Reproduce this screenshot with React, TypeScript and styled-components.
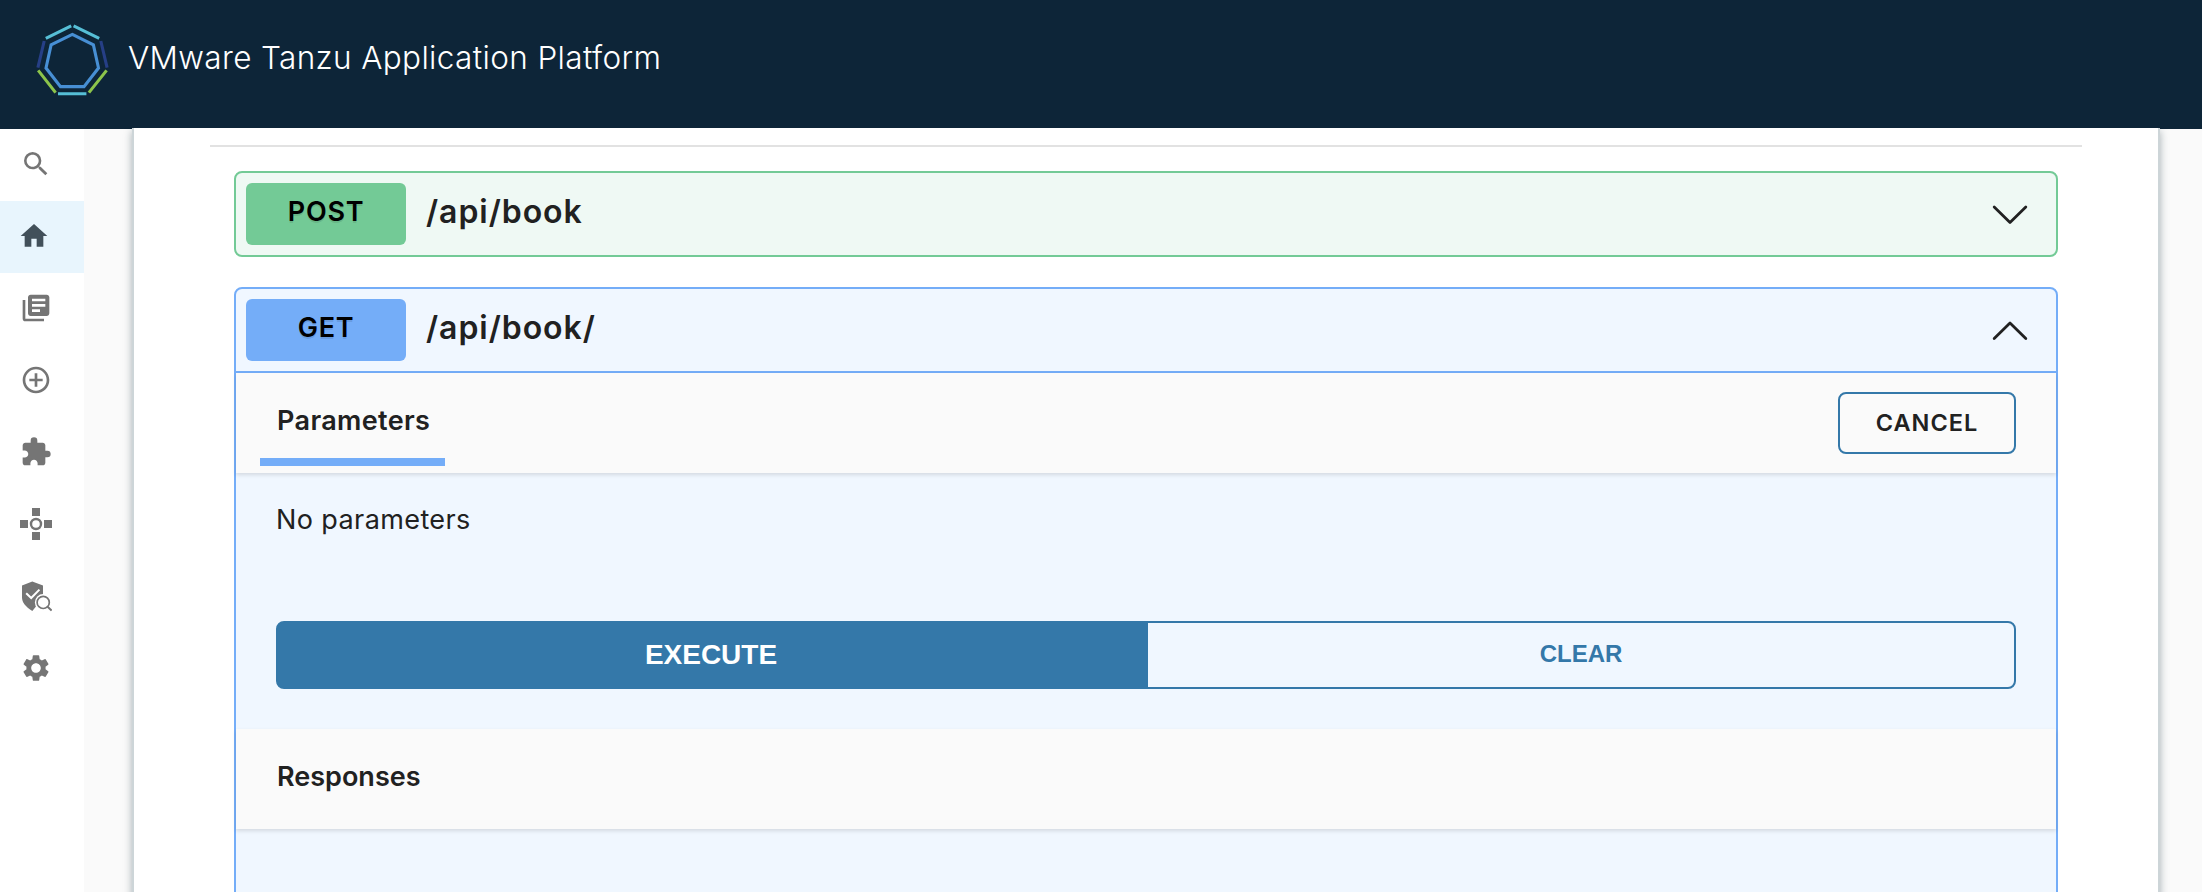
import React from 'react';
import styled, { createGlobalStyle } from 'styled-components';
import { MdAddCircleOutline, MdExtension, MdHome, MdLibraryBooks, MdSearch, MdSettings } from 'react-icons/md';

const GlobalStyle = createGlobalStyle`
  * { box-sizing: border-box; }
  body {
    margin: 0;
    background: #fafafa;
    color: #212121;
    font-family: Inter, "Liberation Sans", sans-serif;
    -webkit-font-smoothing: antialiased;
  }
`;

const Shell = styled.div`
  display: flex;
  flex-direction: column;
  height: 892px;
  overflow: hidden;
`;

const Header = styled.header`
  display: flex;
  align-items: flex-start;
  flex: 0 0 129px;
  padding: 20px 34px;
  gap: 16px;
  background: #0d2538;
`;

const Logo = styled.svg`
  width: 78px;
  height: 80px;
  flex: none;
`;

const Title = styled.h1`
  margin: 19px 0 0;
  color: #fff;
  font-size: 31.5px;
  font-weight: 350;
  line-height: 38px;
  letter-spacing: 0.36px;
`;

const Body = styled.div`
  display: flex;
  flex: 1;
  min-height: 0;
`;

const Sidebar = styled.nav`
  flex: 0 0 84px;
  background: #fff;
`;

const NavItem = styled.a<{ $active?: boolean }>`
  display: flex;
  align-items: center;
  height: 72px;
  padding: 0 0 2px ${(p) => (p.$active ? 18 : 20)}px;
  background: ${(p) => (p.$active ? '#e8f5fd' : 'transparent')};
  color: ${(p) => (p.$active ? '#42505a' : '#757575')};

  svg {
    width: 32px;
    height: 32px;
  }
`;

const Content = styled.main`
  flex: 1;
  min-width: 0;
  display: flex;
  padding: 0 42px 0 48px;
`;

const Paper = styled.section`
  flex: 1;
  height: 800px;
  margin-top: -1px;
  padding: 17px 76px 0;
  border: solid #cdd5d8;
  border-width: 0 2px;
  background: #fff;
  box-shadow: 0 3px 8px rgba(20, 45, 55, 0.36);
  clip-path: inset(0 -20px);
`;

const Divider = styled.hr`
  height: 2px;
  margin: 0;
  border: 0;
  background: #e2e2e2;
`;

const Operations = styled.div`
  display: flex;
  flex-direction: column;
  gap: 30px;
  padding: 24px 24px 0;
`;

type Tone = 'post' | 'get';
const accent = { post: '#73ca96', get: '#74adf8' };
const tint = { post: '#eff9f4', get: '#f0f7ff' };

const Operation = styled.article<{ $tone: Tone }>`
  border: 2px solid ${(p) => accent[p.$tone]};
  border-radius: 8px;
  background: ${(p) => tint[p.$tone]};
`;

const Summary = styled.div<{ $tone: Tone; $open?: boolean }>`
  display: flex;
  align-items: center;
  height: ${(p) => (p.$open ? 84 : 82)}px;
  padding: 0 27px 0 10px;
  ${(p) => p.$open && `border-bottom: 2px solid ${accent[p.$tone]};`}
`;

const Method = styled.span<{ $tone: Tone }>`
  width: 160px;
  height: 62px;
  border-radius: 6px;
  background: ${(p) => accent[p.$tone]};
  color: #000;
  font-size: 27px;
  font-weight: 600;
  line-height: 58px;
  letter-spacing: 0.7px;
  text-align: center;
  text-shadow: 0 2px 0 rgba(0, 0, 0, 0.1);
`;

const Path = styled.span`
  flex: 1;
  padding: 0 20px 5px;
  font-size: 32px;
  font-weight: 600;
  line-height: 38px;
  letter-spacing: 0.95px;
`;

const Arrow = styled.svg`
  width: 38px;
  height: 22px;
  margin-top: 2px;
`;

const SectionBar = styled.div`
  display: flex;
  justify-content: space-between;
  height: 100px;
  padding: 0 40px 0 24px;
  background: #fafafa;
  box-shadow: 0 2px 4px rgba(0, 0, 0, 0.12);
`;

const Tab = styled.h2<{ $selected?: boolean }>`
  align-self: flex-end;
  height: 93px;
  margin: 0 0 7px;
  padding: 29px 15px 0 17px;
  border-bottom: 8px solid ${(p) => (p.$selected ? accent.get : 'transparent')};
  font-size: 27px;
  font-weight: 600;
  line-height: 38px;
  letter-spacing: ${(p) => (p.$selected ? 0.35 : 0)}px;
`;

const CancelButton = styled.button`
  width: 178px;
  height: 62px;
  margin-top: 19px;
  padding: 0 0 2px;
  border: 2px solid #3478a9;
  border-radius: 8px;
  background: transparent;
  color: #212121;
  font: 600 23.5px Inter, sans-serif;
  letter-spacing: 1px;
`;

const Parameters = styled.div`
  display: flex;
  flex-direction: column;
  height: 256px;
  padding: 28px 40px 40px;
`;

const EmptyNote = styled.p`
  flex: 1;
  margin: 0;
  font-size: 27px;
  font-weight: 400;
  line-height: 38px;
  letter-spacing: 0.4px;
`;

const ButtonGroup = styled.div`
  display: grid;
  grid-template-columns: 1fr 1fr;
`;

const ActionButton = styled.button<{ $primary?: boolean }>`
  height: 68px;
  padding: ${(p) => (p.$primary ? '0' : '0 0 3px')};
  border: 2px solid #3478a9;
  border-radius: ${(p) => (p.$primary ? '8px 0 0 8px' : '0 8px 8px 0')};
  background: ${(p) => (p.$primary ? '#3478a9' : 'transparent')};
  color: ${(p) => (p.$primary ? '#fff' : '#3478a9')};
  font: bold ${(p) => (p.$primary ? 28 : 24)}px "Liberation Sans", Arial, sans-serif;
`;

const ResponseBody = styled.div`
  height: 120px;
`;

function TanzuLogo() {
  return (
    <Logo viewBox="34 20 78 80" fill="none" strokeWidth="3.1">
      <path d="M71.2 25.8 45.8 38.4M73.6 25.8 99.2 38.4M58 93.8H86.4" stroke="#56bfd6" />
      <path d="M44.2 41 37.9 67.6M100.8 41 107.1 67.6" stroke="#263f86" />
      <path d="M38.2 70.4 55.6 92.6M106.6 70.4 88.9 92.6" stroke="#8cc44b" />
      <path d="M72.3 34.4 93.4 44.8 98.5 68 84 86.6H60.5L46 68 51.1 44.8Z" stroke="#478fd4" />
    </Logo>
  );
}

function SupplyChainIcon() {
  return (
    <svg viewBox="0 0 32 32" fill="currentColor">
      <path d="M12 0h8v8h-8zM0 12h8v8H0zM24 12h8v8h-8zM12 24h8v8h-8z" />
      <circle cx="16" cy="16" r="5" fill="none" stroke="currentColor" strokeWidth="2.4" />
    </svg>
  );
}

function SecurityIcon() {
  return (
    <svg viewBox="0 0 32 32" fill="none">
      <path d="M12.3 1.6 23 5.6V18L12.3 31C6 27 2 22.5 2 17.5V5.6Z" fill="currentColor" />
      <path d="m6.2 13.2 5 4.8 8.2-8.4" stroke="#fff" strokeWidth="2" />
      <circle cx="23.2" cy="22.4" r="8.3" fill="#fff" />
      <circle cx="23.2" cy="22.4" r="6.1" stroke="currentColor" strokeWidth="1.7" />
      <path d="m27.6 26.8 4 3.8" stroke="currentColor" strokeWidth="2" />
    </svg>
  );
}

function Chevron({ up }: { up?: boolean }) {
  return (
    <Arrow viewBox="0 0 38 22" fill="none" stroke="#212121" strokeWidth="2.8" strokeLinecap="round" strokeLinejoin="round">
      <path d={up ? 'M3.2 18.5 19 3 34.8 18.5' : 'M3.2 3 19 18.5 34.8 3'} />
    </Arrow>
  );
}

export default function App() {
  return (
    <Shell>
      <GlobalStyle />
      <Header>
        <TanzuLogo />
        <Title>VMware Tanzu Application Platform</Title>
      </Header>
      <Body>
        <Sidebar>
          <NavItem><MdSearch /></NavItem>
          <NavItem $active><MdHome /></NavItem>
          <NavItem><MdLibraryBooks /></NavItem>
          <NavItem><MdAddCircleOutline /></NavItem>
          <NavItem><MdExtension /></NavItem>
          <NavItem><SupplyChainIcon /></NavItem>
          <NavItem><SecurityIcon /></NavItem>
          <NavItem><MdSettings /></NavItem>
        </Sidebar>
        <Content>
          <Paper>
            <Divider />
            <Operations>
              <Operation $tone="post">
                <Summary $tone="post">
                  <Method $tone="post">POST</Method>
                  <Path>/api/book</Path>
                  <Chevron />
                </Summary>
              </Operation>
              <Operation $tone="get">
                <Summary $tone="get" $open>
                  <Method $tone="get">GET</Method>
                  <Path>/api/book/</Path>
                  <Chevron up />
                </Summary>
                <SectionBar>
                  <Tab $selected>Parameters</Tab>
                  <CancelButton>CANCEL</CancelButton>
                </SectionBar>
                <Parameters>
                  <EmptyNote>No parameters</EmptyNote>
                  <ButtonGroup>
                    <ActionButton $primary>EXECUTE</ActionButton>
                    <ActionButton>CLEAR</ActionButton>
                  </ButtonGroup>
                </Parameters>
                <SectionBar>
                  <Tab>Responses</Tab>
                </SectionBar>
                <ResponseBody />
              </Operation>
            </Operations>
          </Paper>
        </Content>
      </Body>
    </Shell>
  );
}
